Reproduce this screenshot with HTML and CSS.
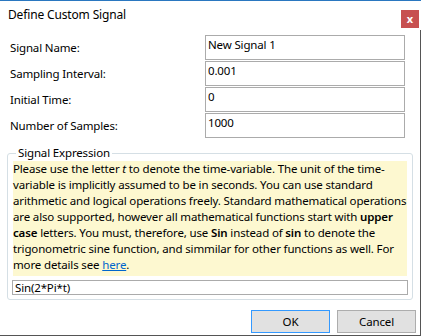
FILE: index.html
```html
<!DOCTYPE html>
<html>
  <head>
    <meta charset="utf-8">
    <title>Define Custom Signal</title>
    <link rel="stylesheet" href="styles.css">
  </head>
  <body>
    <div class="window">
      <div class="titlebar">
        <span class="title">Define Custom Signal</span>
        <button type="button" class="close">x</button>
      </div>

      <div class="content">
        <div class="form">
          <label>Signal Name:</label>
          <input type="text" value="New Signal 1">
          <label>Sampling Interval:</label>
          <input type="text" value="0.001">
          <label>Initial Time:</label>
          <input type="text" value="0">
          <label>Number of Samples:</label>
          <input type="text" value="1000">
        </div>

        <fieldset class="group">
          <legend>Signal Expression</legend>
          <p class="hint">Please use the letter <i>t</i> to denote the time-variable. The unit of the time-variable is implicitly assumed to be in seconds. You can use standard arithmetic and logical operations freely. Standard mathematical operations are also supported, however all mathematical functions start with <b>upper case</b> letters. You must, therefore, use <b>Sin</b> instead of <b>sin</b> to denote the trigonometric sine function, and simmilar for other functions as well. For more details see <a href="#">here</a>.</p>
          <input type="text" class="expr" value="Sin(2*Pi*t)">
        </fieldset>

        <div class="buttons">
          <button type="button" class="btn default">OK</button>
          <button type="button" class="btn">Cancel</button>
        </div>
      </div>
    </div>
  </body>
</html>
```

FILE: styles.css
```css
      * {
	  box-sizing: border-box;
      }

      body {
	  margin: 0;
	  background: #fff;
	  color: #000;
	  font-family: "Noto Sans", "Open Sans", sans-serif;
	  font-size: 11.5px;
	  letter-spacing: -0.15px;
      }

      .window {
	  width: 421px;
	  height: 336px;
	  border-top: 1px solid #2a77c0;
	  border-bottom: 1px solid #555;
	  display: flex;
	  flex-direction: column;
      }

      .titlebar {
	  flex-shrink: 0;
	  height: 29px;
	  display: flex;
	  align-items: center;
	  justify-content: space-between;
	  padding: 0 2px 0 8px;
      }

      .title {
	  font-size: 12px;
	  margin-top: -2px;
      }

      .close {
	  width: 18px;
	  height: 18px;
	  margin-top: 6px;
	  border: none;
	  padding: 0;
	  background: #c75050;
	  color: #fff;
	  font-family: "Noto Sans", sans-serif;
	  font-weight: bold;
	  font-size: 11px;
	  line-height: 16px;
      }

      .content {
	  flex: 1;
	  border-right: 1px solid #555;
	  padding: 5px 4px 0 0;
	  display: flex;
	  flex-direction: column;
      }

      .form {
	  display: grid;
	  grid-template-columns: 195px 200px;
	  row-gap: 1px;
	  padding-left: 10px;
      }

      .form label {
	  padding-top: 5px;
	  line-height: 16px;
      }

      .form input {
	  height: 25px;
	  border: 1px solid #ababab;
	  padding: 0 2px 6px;
	  font: inherit;
	  letter-spacing: inherit;
	  line-height: 16px;
      }

      .group {
	  flex-shrink: 0;
	  margin: 7px 0 0 7px;
	  width: 406px;
	  border: 1px solid #d5dfe5;
	  border-radius: 3px;
	  padding: 0 4px 4px;
      }

      .group legend {
	  padding: 0 2px;
	  margin-left: 4px;
	  line-height: 16px;
      }

      .hint {
	  margin: 0 1px;
	  padding: 0 0 3px;
	  background: #fdf8d0;
	  line-height: 16px;
      }

      .hint b {
	  font-weight: 600;
      }

      .hint a {
	  color: #0066cc;
      }

      .expr {
	  display: block;
	  width: 100%;
	  height: 15px;
	  margin-top: 4px;
	  border: 1px solid #ababab;
	  padding: 0 2px;
	  font: inherit;
	  letter-spacing: inherit;
	  line-height: 13px;
      }

      .buttons {
	  display: flex;
	  justify-content: flex-end;
	  gap: 7px;
	  margin-top: 10px;
      }

      .btn {
	  width: 79px;
	  height: 23px;
	  border: 1px solid #adadad;
	  background: #e1e1e1;
	  font: inherit;
	  letter-spacing: inherit;
	  padding: 0;
      }

      .btn.default {
	  border-color: #3399ff;
      }
```
